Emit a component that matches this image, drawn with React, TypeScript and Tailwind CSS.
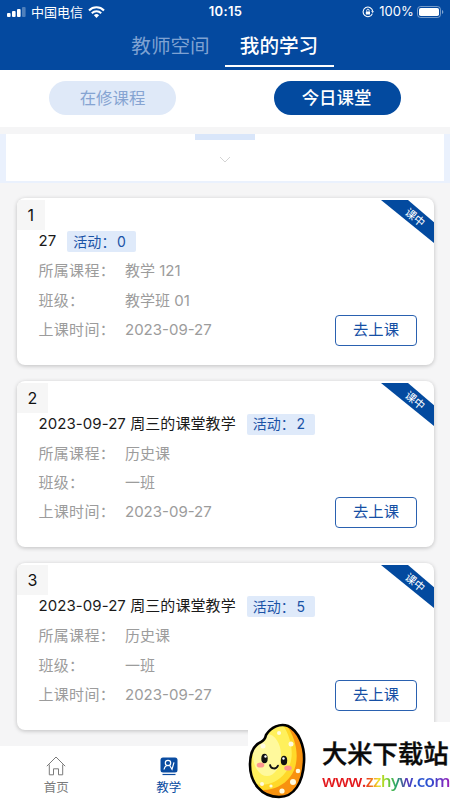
import React from 'react';

type Lesson = {
  id: number;
  title: string;
  activities: number;
  course: string;
  className: string;
  date: string;
};

const lessons: Lesson[] = [
  { id: 1, title: '27', activities: 0, course: '教学 121', className: '教学班 01', date: '2023-09-27' },
  { id: 2, title: '2023-09-27 周三的课堂教学', activities: 2, course: '历史课', className: '一班', date: '2023-09-27' },
  { id: 3, title: '2023-09-27 周三的课堂教学', activities: 5, course: '历史课', className: '一班', date: '2023-09-27' },
];

const StatusBar = () => (
  <div className="flex h-6 items-center justify-between pl-[7px] pr-[6px] text-white">
    <div className="flex w-[180px] items-center">
      <svg width="19" height="10" viewBox="0 0 19 10" fill="currentColor">
        <rect x="0" y="6" width="3.6" height="4" rx="1" />
        <rect x="5" y="4" width="3.6" height="6" rx="1" />
        <rect x="10" y="2" width="3.6" height="8" rx="1" />
        <rect x="15" y="0" width="3.6" height="10" rx="1" opacity="0.3" />
      </svg>
      <span className="ml-[5px] text-[13px] leading-6">中国电信</span>
      <svg className="ml-[5px]" width="17" height="12" viewBox="0 0 17 12" fill="none" stroke="currentColor" strokeWidth="2.1">
        <path d="M1 4.4a10.6 10.6 0 0 1 15 0" />
        <path d="M3.8 7.2a6.7 6.7 0 0 1 9.4 0" />
        <path d="M8.5 12 5.9 9.3a3.7 3.7 0 0 1 5.2 0z" fill="currentColor" stroke="none" />
      </svg>
    </div>
    <span className="text-[13px] font-semibold tracking-[0.3px]">10:15</span>
    <div className="flex w-[180px] items-center justify-end">
      <svg width="12" height="12" viewBox="0 0 12 12" fill="none" stroke="currentColor">
        <path d="M10.4 7.6a4.8 4.8 0 1 1 .3-2.2" strokeWidth="1.1" />
        <path d="M9 5.2h3L10.7 7z" fill="currentColor" stroke="none" />
        <rect x="3.8" y="5.4" width="4.2" height="3.2" rx="0.5" fill="currentColor" stroke="none" />
        <path d="M4.7 5.6V4.4a1.2 1.2 0 0 1 2.4 0v1.2" strokeWidth="0.9" />
      </svg>
      <span className="ml-[5px] text-[13px] tracking-[0.1px]">100%</span>
      <svg className="ml-[3px]" width="27" height="12" viewBox="0 0 27 12">
        <rect x="0.5" y="0.5" width="23" height="11" rx="3" fill="none" stroke="white" opacity="0.45" />
        <rect x="2" y="2" width="20" height="8" rx="1.8" fill="white" />
        <path d="M25 4v4c1.8-.7 1.8-3.3 0-4z" fill="white" opacity="0.5" />
      </svg>
    </div>
  </div>
);

const LessonRow: React.FC<{ label: string; value: string }> = ({ label, value }) => (
  <div className="flex h-[29.25px] items-center text-[15px] text-[#9c9c9c]">
    <span className="w-[86.5px] tracking-[0.3px]">{label}：</span>
    <span>{value}</span>
  </div>
);

const LessonCard: React.FC<{ lesson: Lesson }> = ({ lesson }) => (
  <section className="relative h-[166.5px] overflow-hidden rounded-lg bg-white shadow-[0_1px_4px_rgba(0,0,0,0.22)]">
    <div className="pt-[2px]">
      <span className="flex h-[30px] w-fit items-center bg-[#f6f6f6] px-[11px] text-base text-[#111]">{lesson.id}</span>
    </div>
    <div className="-mt-[3px] pl-[22px]">
      <div className="mb-[0.9px] flex h-[29px] items-center gap-[11px] text-[15px] tracking-[0.07px] text-[#1a1a1a]">
        <span>{lesson.title}</span>
        <span className="flex h-[21px] w-[68.5px] items-center gap-[1.5px] rounded-[2px] bg-[#dfeafa] pb-px pl-[6px] text-[14px] text-[#1a53a6]">
          <span>活动：</span>
          <span>{lesson.activities}</span>
        </span>
      </div>
      <LessonRow label="所属课程" value={lesson.course} />
      <LessonRow label="班级" value={lesson.className} />
      <div className="flex justify-between pr-[16.5px]">
        <LessonRow label="上课时间" value={lesson.date} />
        <button className="-mt-[0.7px] flex h-[31px] w-[82px] items-center justify-center rounded-[4px] border border-[#2a61b0] text-[15.3px] text-[#164fa4]">
          去上课
        </button>
      </div>
    </div>
    {/* corner ribbon */}
    <svg className="absolute right-0 top-[2px]" width="53" height="43" viewBox="0 0 53 43">
      <path d="M0 0h27l26 22.3V43z" fill="#034a9f" />
      <text x="34" y="21.5" transform="rotate(39 34 17.5)" textAnchor="middle" fontSize="11" fill="white">
        课中
      </text>
    </svg>
  </section>
);

const Mascot = () => (
  <svg className="shrink-0" width="58" height="78" viewBox="0 0 58 78">
    <defs>
      <clipPath id="grain">
        <path d="M18 13C23 5 32 1 40 4c11 5 17 21 16 36-1 21-10 35-25 35C13 75 2 60 2 43 2 31 6 23 13 20q4-2 5-7z" />
      </clipPath>
    </defs>
    <g clipPath="url(#grain)">
      <rect width="58" height="78" fill="#f8920f" />
      <path d="M36 0c14 16 17 42 6 55C33 67 15 72 0 64V0z" fill="#ffd829" />
      <path d="M33 0c13 18 14 40 4 51C28 63 12 66 0 59V0z" fill="#fff05c" />
      <ellipse cx="19" cy="33" rx="14" ry="21" fill="#fff99c" />
      <g fill="#fffbe0">
        <circle cx="43" cy="22" r="2.5" />
        <circle cx="31" cy="11" r="2" />
        <circle cx="50" cy="49" r="2.3" />
        <circle cx="45" cy="60" r="3" />
        <circle cx="34" cy="69" r="2.6" />
        <circle cx="23" cy="64" r="1.6" />
        <circle cx="14" cy="62" r="2" />
        <circle cx="15" cy="24" r="2.5" />
      </g>
    </g>
    <path d="M18 13C23 5 32 1 40 4c11 5 17 21 16 36-1 21-10 35-25 35C13 75 2 60 2 43 2 31 6 23 13 20q4-2 5-7z" fill="none" stroke="black" strokeWidth="2.6" />
    <ellipse cx="12.5" cy="43" rx="3.8" ry="2.6" fill="#ff958e" />
    <ellipse cx="40" cy="46" rx="3.8" ry="2.6" fill="#ff958e" />
    <ellipse cx="16.5" cy="36.5" rx="3.2" ry="4.7" fill="#111" />
    <ellipse cx="36" cy="38.5" rx="3.2" ry="4.7" fill="#111" />
    <circle cx="17.5" cy="34.5" r="1.2" fill="white" />
    <circle cx="35.5" cy="36.5" r="1.2" fill="white" />
    <path d="M22 43c1 4 6 5 8 .6" fill="none" stroke="#111" strokeWidth="1.8" strokeLinecap="round" />
  </svg>
);

const Watermark = () => (
  <div className="absolute bottom-0 right-0 flex h-[78px] w-[202px] overflow-hidden bg-white">
    <Mascot />
    <div className="ml-[16px] flex flex-col items-start pt-[15px]">
      <span className="whitespace-nowrap text-[25.3px] font-medium leading-[34px] text-[#0a0a0a] [-webkit-text-stroke:0.4px_#0a0a0a]">大米下载站</span>
      <span className="-mt-px whitespace-nowrap bg-[linear-gradient(90deg,#e3181c_0%,#e3181c_32%,#ee5a1c_37%,#f0e02a_44%,#8ad62a_50%,#25a56a_58%,#5a35b8_66%,#2a55d0_74%,#2a4fd0_84%,#9a20b8_100%)] bg-clip-text font-[family-name:'Open_Sans'] text-[17px] font-semibold leading-[22px] tracking-[-0.62px] text-transparent">
        www.zzhyw.com
      </span>
    </div>
  </div>
);

export default function App() {
  return (
    <div className="relative flex h-[800px] w-[450px] flex-col overflow-hidden bg-[#f5f5f6] font-[Inter,'Noto_Sans_CJK_SC',sans-serif]">
      <header className="h-[70px] bg-[#04499f]">
        <StatusBar />
        <nav className="flex h-[42.5px] justify-center">
          <span className="w-[108px] text-center text-[19.6px] leading-[44px] text-[#7fa2d2]">教师空间</span>
          <span className="w-[109px] border-b-2 border-white text-center text-[19.6px] font-medium leading-[44px] text-white">
            我的学习
          </span>
        </nav>
      </header>

      <div className="flex h-[57px] justify-between bg-white px-[49px] pt-[10.5px]">
        <button className="h-[34.5px] w-[127px] rounded-full bg-[#dfe9f8] pt-px text-[16.4px] text-[#86a4d2]">在修课程</button>
        <button className="h-[34.5px] w-[127px] rounded-full bg-[#034a9f] pr-[2px] pt-px text-[17.4px] font-medium text-white">今日课堂</button>
      </div>

      {/* collapsed calendar */}
      <div className="mt-[7px] h-[49px] bg-[#eaf1fd] px-[6px] pb-[2px]">
        <div className="flex h-full flex-col items-center bg-white">
          <div className="h-[6px] w-[60px] bg-[#d9e6fa]" />
          <svg className="mt-[16px]" width="12" height="8" viewBox="0 0 12 8" fill="none" stroke="#d4d4d4">
            <path d="m1 1 5 5 5-5" />
          </svg>
        </div>
      </div>

      <main className="flex flex-col gap-4 px-[16.5px] pt-[15px]">
        {lessons.map((lesson) => (
          <LessonCard key={lesson.id} lesson={lesson} />
        ))}
      </main>

      <footer className="mt-auto flex h-[54px] bg-white text-[12.5px]">
        <div className="flex w-1/4 flex-col items-center pt-[10px] text-[#7b7b7b]">
          <svg width="20" height="20" viewBox="0 0 20 20" fill="none" stroke="currentColor">
            <path d="M.8 10.2 10 1l9.2 9.2M3.3 8.5v10.3h4.2v-6h5v6h4.2V8.5" />
          </svg>
          <span className="mt-[2px] leading-5">首页</span>
        </div>
        <div className="flex w-1/4 flex-col items-center pt-[10px] text-[#0a4ca1]">
          <svg width="18" height="20" viewBox="0 0 18 20" fill="none">
            <rect x="0.5" y="1.5" width="17" height="15" rx="2.5" fill="currentColor" />
            <path d="M2.5 18.5h13" stroke="currentColor" strokeWidth="1.2" />
            <circle cx="8" cy="7" r="2.7" stroke="white" strokeWidth="1.2" />
            <path d="M4 13.5c.3-2 1.3-3.3 2.7-4M9.5 9.3l2.5 4 2-7" stroke="white" strokeWidth="1.2" />
          </svg>
          <span className="mt-[2px] leading-5">教学</span>
        </div>
      </footer>

      <Watermark />
    </div>
  );
}
